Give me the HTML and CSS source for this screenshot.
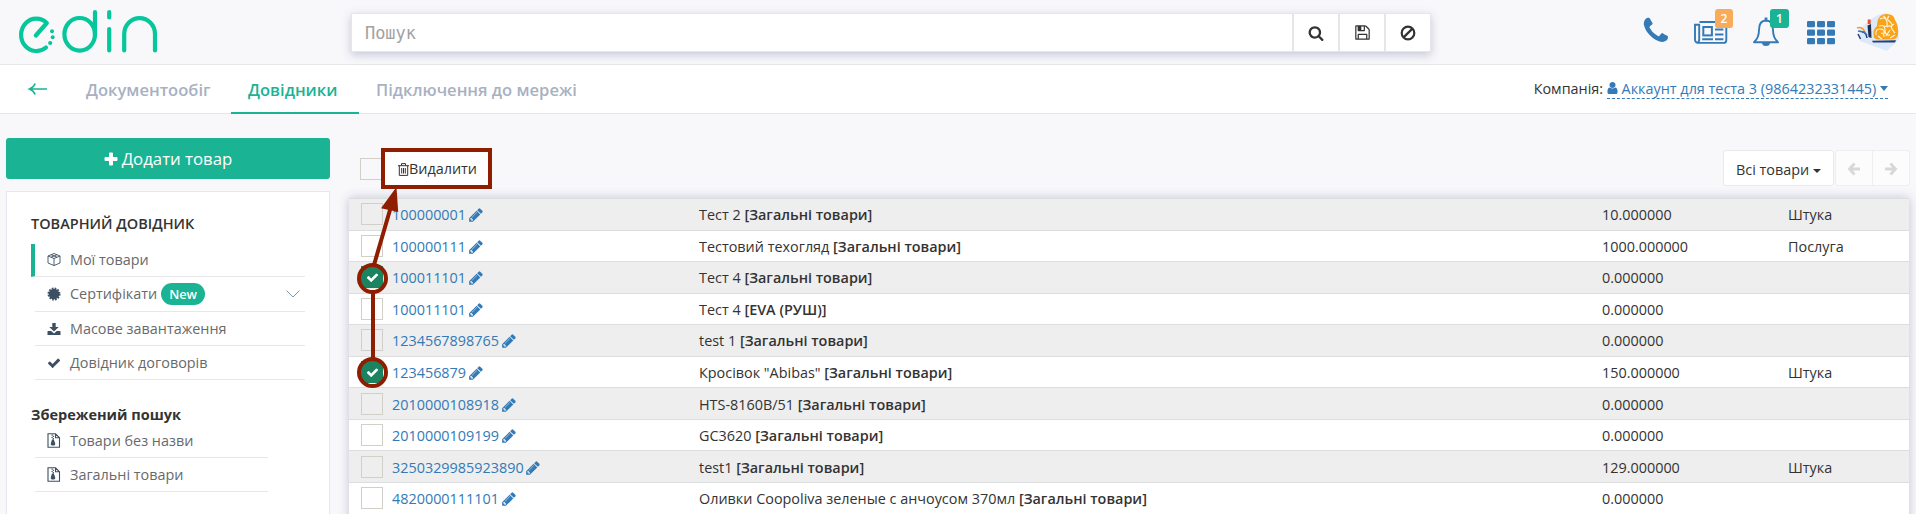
FILE: index.html
```html
<!DOCTYPE html>
<html lang="uk">
<head>
<meta charset="utf-8">
<title>EDIN</title>
<link rel="stylesheet" href="styles.css">
</head>
<body>
<svg class="defs" width="0" height="0">
  <symbol id="pencil" viewBox="0 0 1792 1792"><path d="M491 1536l91-91-235-235-91 91v107h128v128h107zm523-928q0-22-22-22-10 0-17 7l-542 542q-7 7-7 17 0 22 22 22 10 0 17-7l542-542q7-7 7-17zm-54-192l416 416-832 832h-416v-416zm683 96q0 53-37 90l-166 166-416-416 166-165q36-38 90-38 53 0 91 38l235 234q37 39 37 91z"/></symbol>
  <symbol id="check" viewBox="0 0 1792 1792"><path d="M1671 566q0 40-28 68l-724 724-136 136q-28 28-68 28t-68-28l-136-136-362-362q-28-28-28-68t28-68l136-136q28-28 68-28t68 28l294 295 656-657q28-28 68-28t68 28l136 136q28 28 28 68z"/></symbol>
  <symbol id="zip" viewBox="0 0 14 15"><path d="M1 .8h7.5l4 4v9.400H1zM8.500 .8v4h4" fill="none" stroke="currentColor" stroke-width="1.100"/><path d="M4.500 1.500h1.200v1.200H4.500zM5.700 2.700h1.200v1.200H5.700zM4.500 3.900h1.200v1.200H4.500zM5.700 5.100h1.200v1.200H5.700zM5 6.500h1.800l1.400 4q.4 2-2.200 2t-2.200-2z"/></symbol>
</svg>
<header class="header">
  <svg class="logo" width="150" height="64" viewBox="0 0 150 64">
    <g fill="none" stroke="#06c79c" stroke-width="4.200" stroke-linecap="round" stroke-linejoin="round">
      <path d="M46 47.500A15.300 16.200 0 1 1 46.800 23L35.800 35.500"/>
      <ellipse cx="79.700" cy="34.300" rx="15.300" ry="16.300"/>
      <path d="M95 12.200V35M109.200 12.200V17.500M109.200 29V50.500M124.200 50.500V34A15.400 15.900 0 0 1 155 34V50.500" />
    </g>
    <g fill="#06c79c"><circle cx="52" cy="31.300" r="2"/><circle cx="52.700" cy="37.200" r="2"/><circle cx="50.200" cy="43" r="2.100"/></g>
  </svg>
  <div class="search">
    <div class="search-input"><span>Пошук</span></div>
    <div class="search-btn"><svg width="16" height="16" viewBox="0 0 1792 1792"><path d="M1216 832q0-185-131.500-316.500t-316.500-131.500-316.500 131.500-131.500 316.500 131.500 316.500 316.500 131.500 316.500-131.500 131.500-316.500zm512 832q0 52-38 90t-90 38q-54 0-90-38l-343-342q-179 124-399 124-143 0-273.500-55.500t-225-150-150-225-55.500-273.500 55.500-273.500 150-225 225-150 273.500-55.500 273.500 55.500 225 150 150 225 55.500 273.500q0 220-124 399l343 343q37 37 37 90z"/></svg></div>
    <div class="search-btn"><svg width="17" height="17" viewBox="0 0 1792 1792"><path d="M512 1536h768v-384h-768v384zm896 0h128v-896q0-14-10-38.500t-20-34.500l-281-281q-10-10-34-20t-39-10v416q0 40-28 68t-68 28h-576q-40 0-68-28t-28-68v-416h-128v1280h128v-416q0-40 28-68t68-28h832q40 0 68 28t28 68v416zm-384-928v-320q0-13-9.500-22.500t-22.500-9.500h-192q-13 0-22.500 9.500t-9.500 22.500v320q0 13 9.500 22.500t22.500 9.500h192q13 0 22.500-9.500t9.500-22.500zm640 32v928q0 40-28 68t-68 28h-1344q-40 0-68-28t-28-68v-1344q0-40 28-68t68-28h928q40 0 88 20t76 48l280 280q28 28 48 76t20 88z"/></svg></div>
    <div class="search-btn"><svg width="16" height="16" viewBox="0 0 16 16"><g fill="none" stroke="#333" stroke-width="2.200"><circle cx="8" cy="8" r="6.300"/><path d="M3.600 12.400L12.400 3.600"/></g></svg></div>
  </div>
  <svg class="header-icons" width="273" height="64" viewBox="1640 0 273 64">
    <path fill="#337ab7" transform="translate(1640.500 15.500) scale(.0172)" d="M1600 1240q0 27-10 70.500t-21 68.500q-21 50-122 106-94 51-186 51-27 0-53-3.500t-57.500-12.500-47-14.500-55.500-20.500-49-18q-98-35-175-83-127-79-264-216t-216-264q-48-77-83-175-3-9-18-49t-20.500-55.500-14.500-47-12.500-57.500-3.500-53q0-92 51-186 56-101 106-122 25-11 68.500-21t70.500-10q14 0 21 3 18 6 53 76 11 19 30 54t35 63.500 31 53.500q3 4 17.500 25t21.500 35.500 7 28.500q0 20-28.500 50t-62 55-62 53-28.500 46q0 9 5 22.500t8.500 20.500 14 24 11.500 19q76 137 174 235t235 174q2 1 19 11.500t24 14 20.500 8.500 22.500 5q18 0 46-28.500t53-62 55-62 50-28.500q14 0 28.500 7t35.500 21.500 25 17.500q25 15 53.500 31t63.500 35 54 30q70 35 76 53 3 7 3 21z"/>
    <g fill="none" stroke="#337ab7" stroke-width="1.900">
      <path d="M1699.500 22h26.800v18.200q0 2.700-2.700 2.700h-24.400q-4.200 0-4.200-3.500V24.800h4.200v14.800q0 3-2 3"/>
      <rect x="1703.300" y="27" width="8.600" height="8.400" stroke-width="2"/>
      <path d="M1702.200 39.300h10.800M1715 29.500h8.400M1715 34.500h8.400M1715 39.300h8.400"/>
      <path d="M1754 42.300q5-4.500 5-12.300 0-9.500 7-9.500t7 9.500q0 7.800 5 12.300z" stroke-linejoin="round"/>
    </g>
    <path fill="#337ab7" d="M1762 42.500h8q0 3.500-4 3.500t-4-3.500zM1764.600 17.500h2.800v4h-2.800z"/>
    <g fill="#337ab7">
      <rect x="1807" y="21" width="8" height="6.200" rx="1.300"/><rect x="1817" y="21" width="8" height="6.200" rx="1.300"/><rect x="1827" y="21" width="8" height="6.200" rx="1.300"/>
      <rect x="1807" y="29.500" width="8" height="6.200" rx="1.300"/><rect x="1817" y="29.500" width="8" height="6.200" rx="1.300"/><rect x="1827" y="29.500" width="8" height="6.200" rx="1.300"/>
      <rect x="1807" y="38" width="8" height="6.200" rx="1.300"/><rect x="1817" y="38" width="8" height="6.200" rx="1.300"/><rect x="1827" y="38" width="8" height="6.200" rx="1.300"/>
    </g>
    <rect x="1715" y="9" width="18" height="19" rx="3" fill="#f8ac59"/>
    <rect x="1770" y="9" width="19" height="19" rx="3" fill="#1ab394"/>
    <g class="badge-text"><text x="1724" y="23">2</text><text x="1779.500" y="23">1</text></g>
    <path fill="#dde8fa" d="M1859 30l11-10q10-7 16-7l11 9 2 17-12 12-27-10z"/>
    <path fill="#f9a31b" d="M1874 38q-2-9 3-12 0-12 10-12 7 0 8 6 4 7 3 14 0 5-6 5.500h-15z"/>
    <path fill="none" stroke="#fff3d6" stroke-width="1.200" d="M1876 35q-1-6 4-6t4 5M1879 26q6-2 6 4t5 5M1880 19q6-3 7 3t-3 4M1889 16q-3 3 0 5t3 5M1894 24q-4 2-2 5t3 4M1886 36l4-6M1878 36l4 3M1890 38l5-3M1883 16q3 1 3 4M1887 27q4-3 5 2M1881 33q3 0 3 4"/>
    <path fill="#263f77" d="M1872 40.800l24-.5-1 2.200h-22z"/>
    <path fill="none" stroke="#263f77" stroke-width="1.500" d="M1858 34l2.500 5M1862 32q4 0 5 6"/>
    <path fill="#1f2f50" d="M1867.500 25.500l3.500-1.500.5 14-3-1z"/><path fill="#e65332" d="M1867.700 19.500h3v4.500h-3z"/>
    <path fill="none" stroke="#f29b25" stroke-width="1.500" d="M1857 28q5-2 8 4"/><path fill="none" stroke="#3574c4" stroke-width="1.700" d="M1858 31l6 1 3 3"/>
  </svg>
</header>
<nav class="nav">
  <svg class="back" width="20" height="14" viewBox="0 0 20 14"><path d="M19 7H2M7.200 1.500Q5.500 5.500 1.500 7Q5.500 8.500 7.200 12.500" fill="none" stroke="#1ab394" stroke-width="1.600"/></svg>
  <div class="tab tab-docs">Документообіг</div>
  <div class="tab tab-active">Довідники</div>
  <div class="tab tab-net">Підключення до мережі</div>
  <div class="company">Компанія:&nbsp;<a class="account"><svg width="12" height="14" viewBox="200 100 1392 1600"><path d="M1536 1399q0 109-62.500 187t-150.500 78h-854q-88 0-150.500-78t-62.500-187q0-85 8.500-160.500t31.500-152 58.500-131 94-89 134.500-34.500q131 128 313 128t313-128q76 0 134.500 34.500t94 89 58.500 131 31.500 152 8.500 160.500zm-256-887q0 159-112.500 271.500t-271.500 112.500-271.500-112.500-112.500-271.500 112.500-271.500 271.500-112.500 271.500 112.500 112.500 271.500z"/></svg> Аккаунт для теста 3 (9864232331445) <i class="caret"></i></a></div>
</nav>
<div class="body">
  <aside class="side">
    <div class="add"><svg width="14" height="14" viewBox="0 0 14 14"><path fill="#fff" d="M5 1.500q0-1 1-1h2q1 0 1 1V5h3.500q1 0 1 1v2q0 1-1 1H9v3.500q0 1-1 1H6q-1 0-1-1V9H1.500q-1 0-1-1V6q0-1 1-1H5z"/></svg>Додати товар</div>
    <div class="panel">
      <div class="panel-title">ТОВАРНИЙ ДОВІДНИК</div>
      <div class="item item-active"><svg width="14" height="14" viewBox="0 0 14 14"><path fill="none" stroke="currentColor" stroke-width=".9" d="M1 3L7 .5l6 2.500v7L7 12.500l-6-2.500zM1 3L7 5.500l6-2.500M7 5.500v7M4 1.700L10 4.200M10 1.700L4 4.200"/></svg><span>Мої товари</span></div>
      <div class="item item-cert"><svg width="14" height="14" viewBox="0 0 14 14"><circle cx="7" cy="7" r="5.300"/><circle cx="7" cy="7" r="5.600" fill="none" stroke="currentColor" stroke-width="1.800" stroke-dasharray="1.700 1.230"/></svg><span>Сертифікати</span><b class="new">New</b><svg class="chev" width="14" height="8" viewBox="0 0 14 8"><path d="M.5.500L7 7 13.500.500" fill="none" stroke="#8496a9"/></svg></div>
      <div class="item item-mass"><svg width="14" height="14" viewBox="0 0 14 14"><path d="M5.300 1h3.400v4h3L7 9.500 2.300 5h3zM1 9h3.200L7 11.600 9.800 9H13q.5 0 .5.500v3.500H.5V9.500Q.5 9 1 9z"/></svg><span>Масове завантаження</span></div>
      <div class="item"><svg width="14" height="14"><use href="#check"/></svg><span>Довідник договорів</span></div>
      <div class="panel-title saved">Збережений пошук</div>
      <div class="item short"><svg width="14" height="15"><use href="#zip"/></svg><span>Товари без назви</span></div>
      <div class="item short"><svg width="14" height="15"><use href="#zip"/></svg><span>Загальні товари</span></div>
    </div>
  </aside>
  <main class="main">
    <div class="tools">
      <i class="box"></i>
      <div class="delete"><svg width="11" height="13" viewBox="0 0 11 13"><path d="M0 2.700h11M3.500 2.500V.6h4v1.900M1.300 2.700v9.700h8.400V2.700M3.700 5v5.500M5.500 5v5.500M7.300 5v5.500" fill="none" stroke="#333"/></svg>Видалити</div>
      <div class="filter">Всі товари <i class="caret small"></i></div>
      <div class="pager"><span><svg width="12" height="12" viewBox="0 0 12 12"><path d="M6.500 .5L1.500 6l5 5.500M2 6h10" fill="none" stroke="#d8d8d8" stroke-width="2.800"/></svg></span><span><svg width="12" height="12" viewBox="0 0 12 12"><path d="M5.500 .5l5 5.500-5 5.500M10 6H0" fill="none" stroke="#d8d8d8" stroke-width="2.800"/></svg></span></div>
    </div>
    <div class="table">
      <div class="row"><i class="box"></i><a>100000001 <svg><use href="#pencil"/></svg></a><div>Тест 2 <b>[Загальні товари]</b></div><div>10.000000</div><div>Штука</div></div>
      <div class="row"><i class="box"></i><a>100000111 <svg><use href="#pencil"/></svg></a><div>Тестовий техогляд <b>[Загальні товари]</b></div><div>1000.000000</div><div>Послуга</div></div>
      <div class="row"><i class="box on"><svg><use href="#check"/></svg></i><a>100011101 <svg><use href="#pencil"/></svg></a><div>Тест 4 <b>[Загальні товари]</b></div><div>0.000000</div><div></div></div>
      <div class="row"><i class="box"></i><a>100011101 <svg><use href="#pencil"/></svg></a><div>Тест 4 <b>[EVA (РУШ)]</b></div><div>0.000000</div><div></div></div>
      <div class="row"><i class="box"></i><a>1234567898765 <svg><use href="#pencil"/></svg></a><div>test 1 <b>[Загальні товари]</b></div><div>0.000000</div><div></div></div>
      <div class="row"><i class="box on"><svg><use href="#check"/></svg></i><a>123456879 <svg><use href="#pencil"/></svg></a><div>Кросівок "Abibas" <b>[Загальні товари]</b></div><div>150.000000</div><div>Штука</div></div>
      <div class="row"><i class="box"></i><a>2010000108918 <svg><use href="#pencil"/></svg></a><div>HTS-8160B/51 <b>[Загальні товари]</b></div><div>0.000000</div><div></div></div>
      <div class="row"><i class="box"></i><a>2010000109199 <svg><use href="#pencil"/></svg></a><div>GC3620 <b>[Загальні товари]</b></div><div>0.000000</div><div></div></div>
      <div class="row"><i class="box"></i><a>3250329985923890 <svg><use href="#pencil"/></svg></a><div>test1 <b>[Загальні товари]</b></div><div>129.000000</div><div>Штука</div></div>
      <div class="row"><i class="box"></i><a>4820000111101 <svg><use href="#pencil"/></svg></a><div>Оливки Coopoliva зеленые с анчоусом 370мл <b>[Загальні товари]</b></div><div>0.000000</div><div></div></div>
    </div>
  </main>
</div>
<svg class="marks" width="200" height="300" viewBox="340 140 200 300">
  <g fill="none" stroke="#8f1e00" stroke-width="4">
    <path d="M374 265L392 203M373 292V358"/>
    <circle cx="372.500" cy="278.500" r="13.500"/><circle cx="372.500" cy="372.500" r="13.500"/>
  </g>
  <path fill="#8f1e00" d="M396.500 187L381 208.300 398.200 212z"/>
</svg>
</body>
</html>
```
FILE: styles.css
```css
* { box-sizing: border-box; }
body { margin: 0; width: 1916px; height: 514px; overflow: hidden; background: #f8f8fb; color: #333; font: 14.4px/20px "Open Sans", "Noto Sans", sans-serif; }
svg { fill: currentColor; flex: none; overflow: visible; }
.defs { position: absolute; }
.header { height: 65px; border-bottom: 1px solid #e4e8ea; display: flex; }
.logo { margin-right: 201px; }
.search { margin-top: 13px; width: 1080px; height: 39px; display: flex; background: #fff; border: 1px solid #e5e6ea; box-shadow: 0 3px 9px rgba(70, 75, 120, .28); }
.search-input { flex: 1; padding: 1px 13px 0; font: 18px/36px "DejaVu Sans Mono", monospace; color: #a2a2a2; }
.search-input span { display: inline-block; transform: scaleX(.94); transform-origin: left; }
.search-btn { width: 46px; border-left: 2px solid #e5e6ea; display: flex; align-items: center; justify-content: center; }
.header-icons { margin-left: 209px; }
.badge-text { fill: #fff; font-size: 12px; font-weight: 600; text-anchor: middle; }
.nav { height: 49px; background: #fff; border-bottom: 1px solid #e4e8ea; display: flex; align-items: center; padding-left: 28px; }
.tab { height: 49px; line-height: 49px; font-size: 16.560px; font-weight: 600; color: #a7b1c2; padding: 0 17px; white-space: nowrap; }
.tab-docs { margin-left: 20px; width: 163px; padding-left: 18px; }
.tab-active { width: 128px; color: #1ab394; border-bottom: 2px solid #1ab394; }
.company { margin-left: auto; margin-right: 28px; display: flex; }
.account { color: #337ab7; border-bottom: 1px dashed #337ab7; height: 20px; white-space: nowrap; }
.account svg { width: 11px; height: 14px; vertical-align: -1px; }
.caret { display: inline-block; border: 4.500px solid transparent; border-top: 5px solid; border-bottom: 0; vertical-align: 3px; }
.account .caret { border-left: 4px solid transparent; border-right: 4px solid transparent; }
.caret.small { border: 4px solid transparent; border-top: 4px solid #333; border-bottom: 0; vertical-align: 2px; }
.body { display: flex; padding-left: 6px; height: 400px; overflow: hidden; }
.side { width: 324px; padding-top: 24px; }
.add { height: 41px; border-radius: 3px; background: #1ab394; color: #fff; font-size: 16.800px; display: flex; gap: 4px; align-items: center; justify-content: center; }
.panel { margin-top: 12px; height: 340px; background: #fff; border: 1px solid #e7e7ef; padding: 22px 24px 0; }
.panel-title { font-size: 14.500px; font-weight: 600; line-height: 20px; margin-bottom: 10px; }
.item { margin-left: 4px; height: 34px; width: 270px; border-bottom: 1px solid #e7e7e9; display: flex; align-items: center; color: #676a6c; padding-left: 12px; }
.item svg { color: #3d4f63; margin-right: 9px; }
.item-active { margin-left: 0; width: 274px; height: 33px; border-left: 4px solid #1ab394; }
.item-cert { height: 35px; }
.new { margin-left: 4px; padding: 0 8px; border-radius: 11px; background: #1ab394; color: #fff; font-size: 12.800px; font-weight: 600; line-height: 22px; }
.item .chev { margin-left: auto; margin-right: 5px; }
.saved { margin: 25px 0 -1px; font-weight: 700; }
.short { width: 233px; }
.main { margin-left: 18px; width: 1562px; }
.tools { height: 84px; padding: 34px 0 0 12px; display: flex; align-items: flex-start; }
.box { display: block; width: 22px; height: 22px; border: 1px solid #d2cfc8; }
.tools > .box { margin-top: 10px; margin-left: 0; }
.delete { margin-left: -1px; width: 111px; height: 41px; border: 4px solid #8f1e00; background: #fff; padding: 1px 0 0 13px; display: flex; align-items: center; }
.filter { margin: 2px 1px 0 auto; width: 111px; height: 36px; border: 1px solid #e7eaec; border-radius: 3px; background: #fff; line-height: 37px; padding-left: 12px; white-space: nowrap; }
.pager { margin-top: 2px; width: 75px; height: 36px; border: 1px solid #eeeef0; border-radius: 3px; background: #fcfcfd; display: flex; }
.pager span { flex: 1; display: flex; align-items: center; justify-content: center; padding-top: 2px; }
.pager span + span { border-left: 1px solid #eeeef0; }
.table { margin-left: 1px; width: 1560px; height: 330px; background: #fff; box-shadow: 0 0 10px rgba(70, 75, 120, .3); }
.row { height: 31.560px; border-top: 1px solid #dcdddf; display: grid; grid-template-columns: 31px 307px 903px 186px 1fr; padding-left: 12px; align-items: center; }
.row:nth-child(odd) { background: #eee; }
.row > a, .row > div { padding-top: 2px; }
.row b { font-weight: 600; }
.row a { color: #337ab7; }
.row a svg { width: 16px; height: 16px; vertical-align: -3px; margin-left: -2px; }
.row .on { background: #1c8360; border-color: #1c8360; color: #fff; display: flex; align-items: center; justify-content: center; }
.row .on svg { width: 13px; height: 13px; }
.marks { position: absolute; left: 340px; top: 140px; }
```
